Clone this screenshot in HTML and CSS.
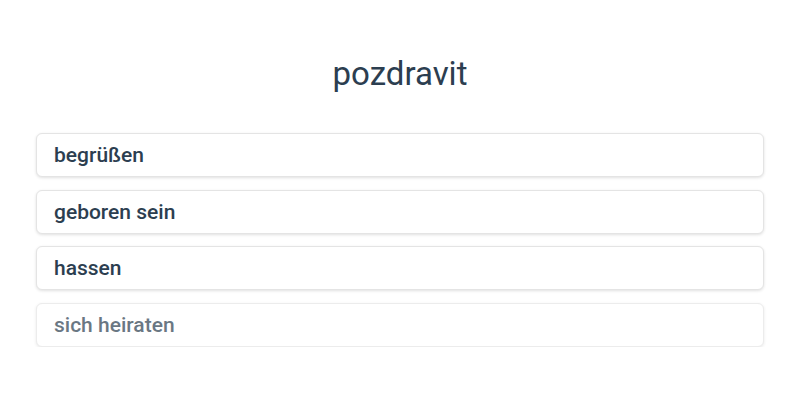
FILE: index.html
```html
<!DOCTYPE html>
<html lang="de">
<head>
    <meta charset="UTF-8">
    <title>pozdravit</title>
    <link rel="stylesheet" href="styles.css">
</head>
<body>
    <div class="quiz">
        <h1 class="word">pozdravit</h1>
        <div class="options">
            <button class="option">begrüßen</button>
            <button class="option">geboren sein</button>
            <button class="option">hassen</button>
            <button class="option faded">sich heiraten</button>
        </div>
    </div>
</body>
</html>
```

FILE: styles.css
```css
body {
    margin: 0;
    font-family: 'Roboto', 'Liberation Sans', sans-serif;
    background: #fff;
    color: #2c3e50;
}

.quiz {
    padding: 52px 36px 0;
}

.word {
    margin: 0 0 37px;
    text-align: center;
    font-size: 33px;
    font-weight: 400;
    line-height: 44px;
    color: #2c3e50;
}

.options {
    display: flex;
    flex-direction: column;
    gap: 12.7px;
}

.option {
    display: block;
    width: 100%;
    height: 44px;
    padding: 0 17px;
    text-align: left;
    font-family: inherit;
    font-size: 21px;
    font-weight: 500;
    color: #2c3e50;
    background: #fff;
    border: 1px solid #e4e4e4;
    border-radius: 6px;
    box-shadow: 0 1px 3px rgba(0, 0, 0, 0.12);
}

.option.faded {
    opacity: 0.7;
}
```
